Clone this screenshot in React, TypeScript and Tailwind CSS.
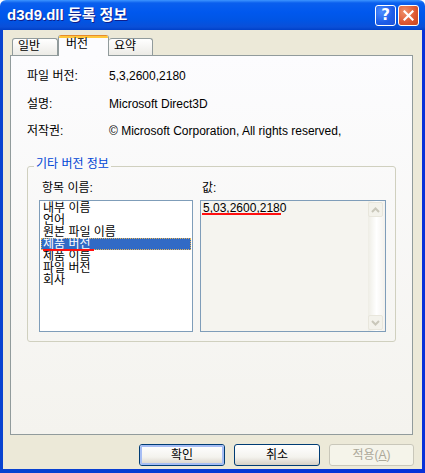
import React from "react";

const items = ["내부 이름", "언어", "원본 파일 이름", "제품 버전", "제품 이름", "파일 버전", "회사"];

const infoRows = [
  { label: "파일 버전:", value: "5,3,2600,2180" },
  { label: "설명:", value: "Microsoft Direct3D" },
  { label: "저작권:", value: "© Microsoft Corporation, All rights reserved," },
];

function Chevron({ up }: { up?: boolean }) {
  return (
    <svg width="9" height="6" viewBox="0 0 9 6">
      <polyline
        points={up ? "1,5 4.5,1.5 8,5" : "1,1 4.5,4.5 8,1"}
        fill="none"
        stroke="#C9C7BA"
        strokeWidth="2"
      />
    </svg>
  );
}

function Button({ label, isDefault, disabled }: { label: React.ReactNode; isDefault?: boolean; disabled?: boolean }) {
  if (disabled) {
    return (
      <div className="flex h-[22px] w-[85px] items-center justify-center rounded-[3px] border border-[#C9C7BA] bg-[#F5F4EA] text-[12px] leading-[12px] text-[#ACA899]">
        {label}
      </div>
    );
  }
  return (
    <div className="flex h-[22px] w-[86px] rounded-[3px] border border-[#003C74] bg-[linear-gradient(180deg,#FFFFFF_0%,#F4F3EE_60%,#D6D0C5_100%)]">
      <div
        className={`flex flex-1 items-center justify-center rounded-[2px] text-[12px] leading-[12px] text-black ${
          isDefault ? "border-2 border-[#A6BDF4]" : ""
        }`}
      >
        {label}
      </div>
    </div>
  );
}

export default function App() {
  return (
    <div className="flex h-[473px] w-[425px] flex-col overflow-hidden rounded-t-[6px] font-['Liberation_Sans','Noto_Sans_CJK_KR',sans-serif] text-[12px] leading-[12px] text-black">
      {/* title bar */}
      <div className="flex h-[30px] shrink-0 items-center bg-[linear-gradient(180deg,#3D95FF_0px,#0A5FEE_3px,#0058EE_12px,#0055E5_20px,#0A4FD8_27px,#0040C8_30px)] pl-[7px] pr-[6px]">
        <span className="text-[15px] font-bold leading-[16px] text-white [text-shadow:1px_1px_0_#0F1F8C]">d3d9.dll 등록 정보</span>
        <div className="ml-auto flex gap-[2px]">
          <div className="flex h-[21px] w-[21px] items-center justify-center rounded-[3px] border border-white bg-[radial-gradient(circle_at_30%_30%,#4C8DFF,#1C5CE8_60%,#2254D6)]">
            <span className="font-['DejaVu_Sans',sans-serif] text-[15px] font-bold leading-[15px] text-white">?</span>
          </div>
          <div className="flex h-[21px] w-[21px] items-center justify-center rounded-[3px] border border-white bg-[radial-gradient(circle_at_30%_30%,#F0916A,#DD5630_60%,#C6451F)]">
            <svg width="11" height="11" viewBox="0 0 11 11">
              <path d="M1.5 1.5 L9.5 9.5 M9.5 1.5 L1.5 9.5" stroke="white" strokeWidth="2.2" strokeLinecap="square" />
            </svg>
          </div>
        </div>
      </div>

      {/* window frame */}
      <div className="flex flex-1 bg-[linear-gradient(90deg,#0843D0,#0831D9)] px-[3px] pb-[4px]">
        <div className="flex flex-1 flex-col bg-[#ECE9D8] pl-[7px] pr-[8px] pt-[5px]">
          {/* tabs */}
          <div className="flex h-[20px] items-end pl-[2px]">
            <div className="h-[17px] w-[46px] rounded-t-[3px] border border-b-0 border-[#919B9C] bg-[linear-gradient(180deg,#FFFFFF,#ECEBE6)] pl-[5px] pt-[1px]">
              일반
            </div>
            <div className="relative z-10 -mb-px flex h-[21px] w-[51px] flex-col overflow-hidden rounded-t-[3px] border-x border-[#919B9C] bg-[#FCFCFE]">
              <div className="h-[1px] bg-[#E68B2C]" />
              <div className="h-[2px] bg-[#FFC73C]" />
              <span className="pl-[7px]">버전</span>
            </div>
            <div className="h-[17px] w-[44px] rounded-t-[3px] border border-b-0 border-l-0 border-[#919B9C] bg-[linear-gradient(180deg,#FFFFFF,#ECEBE6)] pl-[5px] pt-[1px]">
              요약
            </div>
          </div>

          {/* panel */}
          <div className="mr-[1px] flex h-[380px] flex-col border border-[#919B9C] bg-[linear-gradient(180deg,#FCFCFE,#F4F3EE)] px-[16px] pt-[14px]">
            {infoRows.map((row, i) => (
              <div key={row.label} className={`flex ${i === 1 ? "mt-[16px]" : i === 2 ? "mt-[15px]" : ""}`}>
                <span className="w-[82px]">{row.label}</span>
                <span>{row.value}</span>
              </div>
            ))}

            <fieldset className="mt-[21px] rounded-[3px] border border-[#D0D0BF]">
              <legend className="ml-[6px] px-[2px] pb-[4px] leading-[12px] text-[#0046D5]">기타 버전 정보</legend>
              <div className="grid grid-cols-[154px_186px] gap-x-[7px] pb-[9px] pl-[11px] pr-[9px] pt-[8px]">
                <span className="pl-[3px]">항목 이름:</span>
                <span className="pl-[2px]">값:</span>

                <div className="mt-[6px] flex h-[132px] flex-col border border-[#7F9DB9] bg-white p-px">
                  {items.map((item, i) =>
                    i === 3 ? (
                      <div key={item} className="relative h-[12px] border border-dotted border-[#E2B45A] bg-[#316AC5] pl-[1px] leading-[10px] text-white">
                        {item}
                        <div className="absolute left-[1px] top-[10px] h-[2px] w-[51px] bg-[#FF1010]" />
                      </div>
                    ) : (
                      <div key={item} className="h-[12px] pl-[2px]">
                        {item}
                      </div>
                    )
                  )}
                </div>

                <div className="mt-[6px] flex h-[132px] border border-[#7F9DB9] bg-[#F5F4EF]">
                  <div className="flex-1 pl-[2px] pt-px">
                    <span className="relative">
                      5,03,2600,2180
                      <span className="absolute -left-[1px] top-[12px] h-[2px] w-[79px] bg-[#FF1010]" />
                    </span>
                  </div>
                  <div className="flex w-[17px] flex-col justify-between bg-[linear-gradient(90deg,#EEEDE5,#FFFFFF_50%,#F3F1EC)] py-px pl-0 pr-[2px]">
                    <div className="flex h-[15px] w-[15px] items-center justify-center rounded-[2px] border border-[#E8E6DC] bg-[#F3F2EB]">
                      <Chevron up />
                    </div>
                    <div className="flex h-[15px] w-[15px] items-center justify-center rounded-[2px] border border-[#E8E6DC] bg-[#F3F2EB]">
                      <Chevron />
                    </div>
                  </div>
                </div>
              </div>
            </fieldset>
          </div>

          {/* buttons */}
          <div className="mt-[9px] flex justify-end gap-[9px]">
            <Button label="확인" isDefault />
            <Button label="취소" />
            <Button
              label={
                <span>
                  적용(<span className="underline">A</span>)
                </span>
              }
              disabled
            />
          </div>
        </div>
      </div>
    </div>
  );
}
